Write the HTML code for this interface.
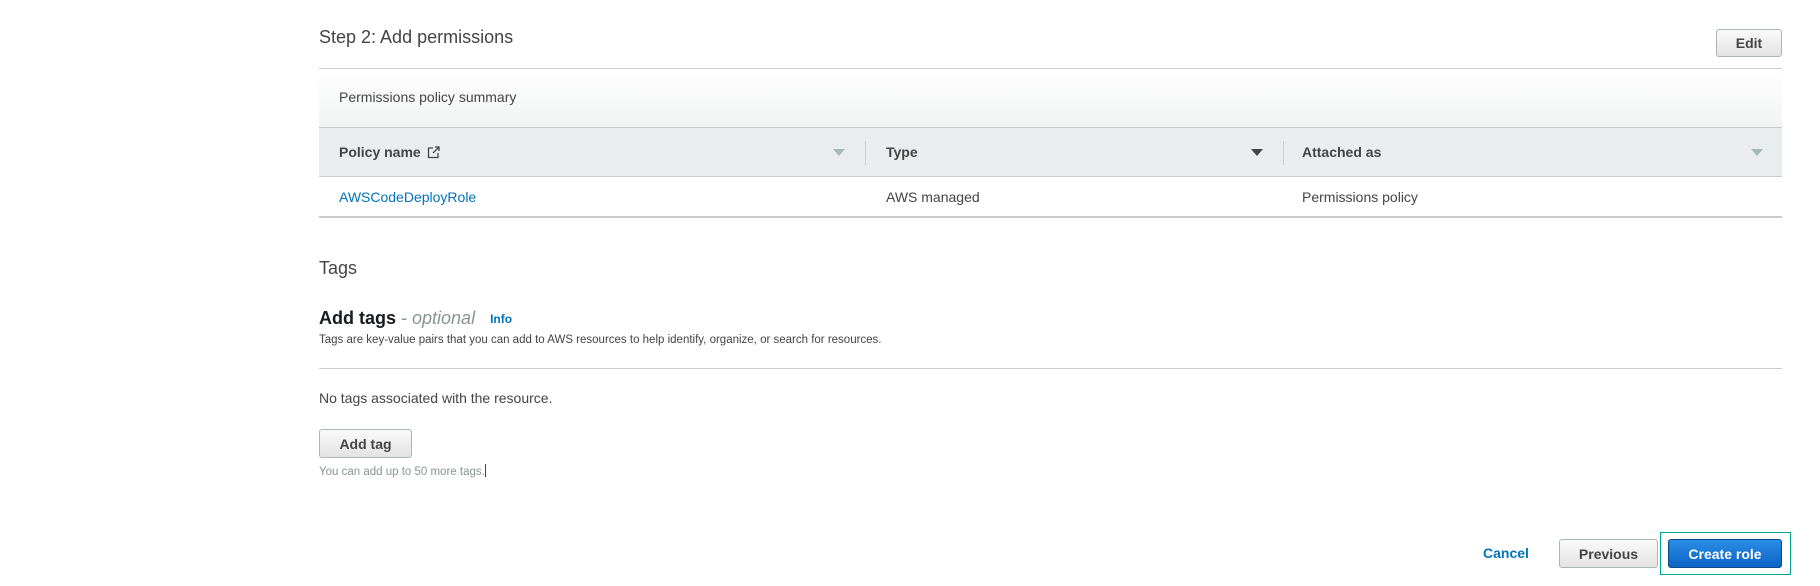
<!DOCTYPE html>
<html><head><style>
body{margin:0;width:1820px;height:586px;background:#fff;font-family:"Liberation Sans",sans-serif;color:#16191f;position:relative;overflow:hidden}
.a{position:absolute;white-space:nowrap}
.btn{position:absolute;box-sizing:border-box;border:1px solid #aab7b8;border-radius:3px;background:linear-gradient(#fafafa,#e3e3e3);font-weight:bold;font-size:14px;color:#444;display:flex;align-items:center;justify-content:center}
.tri{position:absolute;width:0;height:0;border-left:6px solid transparent;border-right:6px solid transparent;border-top:7px solid #aab7b8}
</style></head><body>
<div class="a" style="left:319px;top:27px;font-size:18px;color:#444">Step 2: Add permissions</div>
<div class="btn" style="left:1716px;top:29px;width:66px;height:28px">Edit</div>
<div class="a" style="left:319px;top:68px;width:1463px;height:60px;border-top:1px solid #ccc;border-bottom:1px solid #ccc;box-sizing:border-box;background:linear-gradient(#fff,#f2f3f3)"></div>
<div class="a" style="left:339px;top:89px;font-size:14px;color:#444">Permissions policy summary</div>
<div class="a" style="left:319px;top:128px;width:1463px;height:49px;background:#eaeded;border-bottom:1px solid #ccc;box-sizing:border-box"></div>
<div class="a" style="left:339px;top:144px;font-size:14px;font-weight:bold;color:#444">Policy name <svg width="13" height="13" viewBox="0 0 13 13" style="vertical-align:-2px;margin-left:2px"><path d="M6 2H1.5v9.5H11V7M8 1h4v4M12 1L6 7" fill="none" stroke="#444" stroke-width="1.3"/></svg></div>
<div class="tri" style="left:833px;top:149px"></div>
<div class="a" style="left:865px;top:141px;width:1px;height:24px;background:#ccc"></div>
<div class="a" style="left:886px;top:144px;font-size:14px;font-weight:bold;color:#444">Type</div>
<div class="tri" style="left:1251px;top:149px;border-top-color:#444"></div>
<div class="a" style="left:1283px;top:141px;width:1px;height:24px;background:#ccc"></div>
<div class="a" style="left:1302px;top:144px;font-size:14px;font-weight:bold;color:#444">Attached as</div>
<div class="tri" style="left:1751px;top:149px"></div>
<div class="a" style="left:319px;top:177px;width:1463px;height:41px;border-bottom:2px solid #ccc;box-sizing:border-box"></div>
<div class="a" style="left:339px;top:189px;font-size:14px;color:#0073bb">AWSCodeDeployRole</div>
<div class="a" style="left:886px;top:189px;font-size:14px;color:#444">AWS managed</div>
<div class="a" style="left:1302px;top:189px;font-size:14px;color:#444">Permissions policy</div>
<div class="a" style="left:319px;top:258px;font-size:18px;color:#444">Tags</div>
<div class="a" style="left:319px;top:308px;font-size:18px;font-weight:bold;color:#16191f">Add tags<span style="font-weight:normal;font-style:italic;color:#879596"> - optional</span><span style="font-size:12px;color:#0073bb;margin-left:15px;vertical-align:1px">Info</span></div>
<div class="a" style="left:319px;top:334px;font-size:11.5px;color:#444">Tags are key-value pairs that you can add to AWS resources to help identify, organize, or search for resources.</div>
<div class="a" style="left:319px;top:368px;width:1463px;height:1px;background:#ccc"></div>
<div class="a" style="left:319px;top:390px;font-size:14px;color:#444">No tags associated with the resource.</div>
<div class="btn" style="left:319px;top:429px;width:93px;height:29px">Add tag</div>
<div class="a" style="left:319px;top:464px;font-size:11.5px;color:#879596">You can add up to 50 more tags.<span style="display:inline-block;width:1px;height:13px;background:#444;vertical-align:-2px"></span></div>
<div class="a" style="left:1483px;top:545px;font-size:14px;font-weight:bold;color:#0073bb">Cancel</div>
<div class="btn" style="left:1559px;top:539px;width:99px;height:29px">Previous</div>
<div class="a" style="left:1660px;top:532px;width:131px;height:43px;border:1px solid #00a591;box-sizing:border-box"></div>
<div class="btn" style="left:1668px;top:539px;width:114px;height:29px;background:linear-gradient(#2b8ee6,#0b62c4);border-color:#0a4a8a;color:#fff">Create role</div>
</body></html>
